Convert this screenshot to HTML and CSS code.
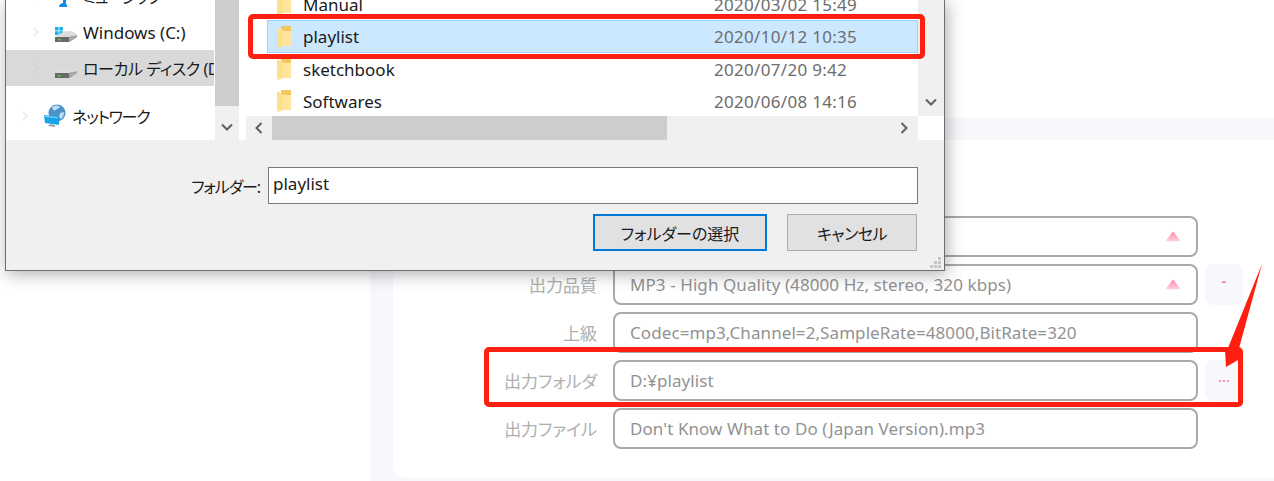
FILE: index.html
```html
<!DOCTYPE html>
<html lang="ja">

<head>
    <meta charset="UTF-8">
    <meta name="viewport" content="width=device-width, initial-scale=1.0">
    <title>出力設定</title>
    <link rel="stylesheet" href="styles.css">
</head>

<body>
    <!-- app behind the dialog -->
    <div class="app">
        <div class="card">
            <div class="row">
                <label class="label"></label>
                <div class="field">
                    <span></span>
                    <svg class="tri" width="14" height="11" viewBox="0 0 14 11"><use href="#tri"/></svg>
                </div>
                <div class="side"></div>
            </div>
            <div class="row">
                <label class="label">出力品質</label>
                <div class="field">
                    <span>MP3 - High Quality (48000 Hz, stereo, 320 kbps)</span>
                    <svg class="tri" width="14" height="11" viewBox="0 0 14 11"><use href="#tri"/></svg>
                </div>
                <button class="side side-btn minus">-</button>
            </div>
            <div class="row">
                <label class="label">上級</label>
                <div class="field"><span>Codec=mp3,Channel=2,SampleRate=48000,BitRate=320</span></div>
                <div class="side"></div>
            </div>
            <div class="row">
                <label class="label">出力フォルダ</label>
                <div class="field"><span>D:¥playlist</span></div>
                <button class="side side-btn">...</button>
            </div>
            <div class="row">
                <label class="label">出力ファイル</label>
                <div class="field"><span>Don't Know What to Do (Japan Version).mp3</span></div>
                <div class="side"></div>
            </div>
        </div>
    </div>

    <!-- folder picker dialog -->
    <div class="dialog">
        <div class="browser">
            <div class="tree">
                <div class="tree-item sub">
                    <svg class="chev" width="6" height="10" viewBox="0 0 6 10"><path d="M1 1l4 4-4 4"/></svg>
                    <svg class="ico" width="22" height="22" viewBox="0 0 22 22"><path d="M8 18V7l11-3v3l-8 2v10a4 3.5 0 1 1-3-1z" fill="#0f8ae6"/></svg>
                    <span class="kana">ミュージック</span>
                </div>
                <div class="tree-item sub">
                    <svg class="chev" width="6" height="10" viewBox="0 0 6 10"><path d="M1 1l4 4-4 4"/></svg>
                    <svg class="ico" width="22" height="22" viewBox="0 0 22 22">
                        <path d="M0 6h3.600v3.600H0zM4.300 6h3.600v3.600H4.300zM0 10.300h3.600v3.600H0zM4.300 10.300h3.600v3.600H4.300z" fill="#12b0ee"/>
                        <use href="#drive"/>
                    </svg>
                    <span>Windows (C:)</span>
                </div>
                <div class="tree-item sub on">
                    <svg class="chev" width="6" height="10" viewBox="0 0 6 10"><path d="M1 1l4 4-4 4"/></svg>
                    <svg class="ico" width="22" height="22" viewBox="0 0 22 22"><use href="#drive"/></svg>
                    <span class="kana">ローカル ディスク (D:)</span>
                </div>
                <div class="tree-item net">
                    <svg class="chev" width="6" height="10" viewBox="0 0 6 10"><path d="M1 1l4 4-4 4"/></svg>
                    <svg class="ico" width="22" height="24" viewBox="0 0 22 24">
                        <circle cx="13" cy="9" r="8.500" fill="#4b93c9"/>
                        <path d="M8 3c3-2 6-2 8 0-1 2-3 1-4 3-2 1-3 0-4-3zM16 9l4-1c0 3-1 5-3 7-2-1-2-4-1-6z" fill="#bfe0f0"/>
                        <path d="M0 11l15 2v8L1 19z" fill="#19a3e8"/>
                        <path d="M1 11.500l13 1.800v1L1 13z" fill="#7fd0f5"/>
                        <path d="M6 20l5 1v2l-7-1z" fill="#9aa7b0"/>
                    </svg>
                    <span class="kana">ネットワーク</span>
                </div>
            </div>
            <div class="tree-scroll">
                <div class="thumb-v"></div>
                <svg class="arrow" width="12" height="8" viewBox="0 0 12 8"><path d="M1 1.500l5 5 5-5"/></svg>
            </div>
            <div class="pane">
                <div class="pane-top">
                    <div class="list">
                        <div class="file"><svg class="folder" width="14" height="22" viewBox="0 0 14 22"><use href="#folder"/></svg><span class="name">Manual</span><span class="date">2020/03/02 15:49</span></div>
                        <div class="file sel"><svg class="folder" width="14" height="22" viewBox="0 0 14 22"><use href="#folder"/></svg><span class="name">playlist</span><span class="date">2020/10/12 10:35</span></div>
                        <div class="file"><svg class="folder" width="14" height="22" viewBox="0 0 14 22"><use href="#folder"/></svg><span class="name">sketchbook</span><span class="date">2020/07/20 9:42</span></div>
                        <div class="file"><svg class="folder" width="14" height="22" viewBox="0 0 14 22"><use href="#folder"/></svg><span class="name">Softwares</span><span class="date">2020/06/08 14:16</span></div>
                    </div>
                    <div class="list-scroll">
                        <svg class="arrow" width="12" height="8" viewBox="0 0 12 8"><path d="M1 1.500l5 5 5-5"/></svg>
                    </div>
                </div>
                <div class="pane-bottom">
                    <div class="hscroll">
                        <div class="h-end"><svg class="arrow" width="8" height="12" viewBox="0 0 8 12"><path d="M6.500 1l-5 5 5 5"/></svg></div>
                        <div class="thumb-h"></div>
                        <div class="h-end h-right"><svg class="arrow" width="8" height="12" viewBox="0 0 8 12"><path d="M1.500 1l5 5-5 5"/></svg></div>
                    </div>
                    <div class="corner"></div>
                </div>
            </div>
        </div>
        <div class="footer">
            <div class="name-row">
                <label class="name-label">フォルダー:</label>
                <input class="name-input" type="text" value="playlist">
            </div>
            <div class="buttons">
                <button class="dlg-btn primary">フォルダーの選択</button>
                <button class="dlg-btn cancel">キャンセル</button>
            </div>
            <svg class="grip" width="12" height="12" viewBox="0 0 12 12"><path d="M8 0h3v3H8zM4 4h3v3H4zM8 4h3v3H8zM0 8h3v3H0zM4 8h3v3H4zM8 8h3v3H8z" fill="#c4c4c4"/></svg>
        </div>
    </div>

    <!-- red marks drawn on top of the screenshot -->
    <div class="mark mark-list"></div>
    <div class="mark mark-field"></div>
    <svg class="pointer" width="40" height="106" viewBox="0 0 40 106"><path d="M38 0L14 88 15 93 14 96 2 103 1 86 4 84z" fill="#ff1f10"/></svg>

    <!-- shared shapes -->
    <svg class="defs" width="0" height="0">
        <defs>
            <linearGradient id="pink" x1="0" y1="0" x2="0" y2="1">
                <stop offset="0" stop-color="#ff8fae"/>
                <stop offset="1" stop-color="#ffcbd9"/>
            </linearGradient>
            <path id="tri" d="M7 1.500L13 9.500H1z" fill="url(#pink)" stroke="url(#pink)" stroke-width="1.500" stroke-linejoin="round"/>
            <g id="drive">
                <path d="M0 16L8 11Q10 10 15 10 19 10 22 14V15L14 17H2z" fill="#dcdcdc"/>
                <path d="M0 16H14L22 14.500V16L14 21H0z" fill="#6a6a6a"/>
                <path d="M14 16L22 14.500V16L14 21z" fill="#a8a8a8"/>
                <path d="M3 18h3v1.500H3z" fill="#4ec24e"/>
            </g>
            <g id="folder">
                <path d="M4 0h10v20H4z" fill="#f0c85f"/>
                <path d="M6 5h8v15H6z" fill="#ffe69c"/>
                <path d="M0 1l6 3v16l-4 2-2-1z" fill="#fde08c"/>
            </g>
        </defs>
    </svg>
</body>

</html>
```

FILE: styles.css
```css
* {
    box-sizing: border-box;
}

html,
body {
    margin: 0;
    height: 481px;
    overflow: hidden;
    background-color: #fff;
}

body {
    position: relative;
    font-family: "Noto Sans", "Noto Sans CJK JP", sans-serif;
    font-size: 17px;
    font-feature-settings: "palt";
}

.defs {
    position: absolute;
}

/* app */
.app {
    margin: 118px 0 0 370px;
    padding: 22px 0 3px 23px;
    height: 363px;
    background-color: #f6f8fc;
}

.card {
    display: flex;
    flex-direction: column;
    gap: 7px;
    height: 338px;
    padding-top: 76px;
    background-color: #fff;
    border-bottom-left-radius: 14px;
}

.row {
    display: flex;
    align-items: center;
    height: 41px;
}

.label {
    width: 204px;
    margin-right: 16px;
    text-align: right;
    font-size: 17px;
    color: #aeaeae;
}

.field {
    display: flex;
    align-items: center;
    justify-content: space-between;
    width: 585px;
    height: 41px;
    padding: 0 16px 0 15px;
    border: 2px solid #a9a9a9;
    border-radius: 8px;
    font-size: 17px;
    letter-spacing: .08px;
    color: #929292;
}

.tri {
    display: block;
}

.side {
    width: 38px;
    height: 41px;
    margin-left: 7px;
}

.side-btn {
    padding: 0 0 10px;
    border: 0;
    border-radius: 8px;
    background-color: #f6f8fc;
    color: #ff6f9f;
    font-family: inherit;
    font-size: 15px;
}

.minus {
    padding-bottom: 10px;
    font-weight: 600;
}

/* dialog */
.dialog {
    position: absolute;
    left: 5px;
    top: 0;
    display: flex;
    flex-direction: column;
    width: 940px;
    height: 271px;
    border: 1px solid #6e6e6e;
    border-top: 0;
    background-color: #f0f0f0;
    box-shadow: 2px 3px 16px rgba(0, 0, 0, .32);
    color: #1a1a1a;
}

.browser {
    display: flex;
    height: 140px;
    background-color: #fff;
}

.tree {
    display: flex;
    flex-direction: column;
    justify-content: flex-end;
    flex: none;
    width: 208px;
    height: 140px;
    margin-right: 1px;
    padding-bottom: 6px;
    overflow: hidden;
}

.tree-item {
    display: flex;
    align-items: center;
    flex: none;
    height: 36px;
    white-space: nowrap;
}

.tree-item.sub {
    padding-left: 27px;
}

.tree-item.net {
    margin-top: 12px;
    padding-left: 16px;
}

.tree-item.on {
    background-color: #d9d9d9;
}

.kana {
    font-size: 16px;
    letter-spacing: -1.200px;
}

.tree-item.on .kana {
    letter-spacing: -.4px;
}

.chev {
    flex: none;
    margin-right: 16px;
    fill: none;
    stroke: #e8e8e8;
    stroke-width: 1.500;
}

.tree-item.on .chev {
    stroke: #d2d2d2;
}

.ico {
    flex: none;
    margin-right: 6px;
}

.tree-scroll {
    display: flex;
    flex-direction: column;
    align-items: center;
    flex: none;
    width: 24px;
    background-color: #f0f0f0;
}

.thumb-v {
    width: 100%;
    height: 106px;
    background-color: #cdcdcd;
}

.arrow {
    display: block;
    fill: none;
    stroke: #606060;
    stroke-width: 2;
}

.tree-scroll .arrow {
    margin-top: 17px;
}

.pane {
    display: flex;
    flex-direction: column;
    flex: none;
    width: 698px;
    margin-left: 7px;
}

.pane-top {
    display: flex;
    height: 116px;
}

.list {
    flex: none;
    width: 672px;
    height: 116px;
    margin-top: -12px;
    padding-left: 21px;
}

.file {
    display: flex;
    align-items: center;
    height: 32px;
    padding-left: 10px;
    white-space: nowrap;
}

.file.sel {
    height: 33px;
    padding-left: 9px;
    border: 1px solid #99d1ff;
    background-color: #cce8ff;
}

.folder {
    flex: none;
    margin-right: 12px;
}

.name {
    width: 411px;
}

.date {
    letter-spacing: .3px;
    color: #6d6d6d;
}

.list-scroll {
    display: flex;
    justify-content: center;
    flex: none;
    width: 26px;
    padding-top: 98px;
    background-color: #f0f0f0;
}

.pane-bottom {
    display: flex;
    height: 24px;
}

.hscroll {
    display: flex;
    flex: none;
    width: 672px;
    background-color: #f0f0f0;
}

.h-end {
    display: flex;
    align-items: center;
    justify-content: center;
    flex: none;
    width: 26px;
}

.h-right {
    margin-left: auto;
    margin-right: 1px;
}

.thumb-h {
    width: 395px;
    background-color: #cdcdcd;
}

.corner {
    flex: 1;
    background-color: #fff;
}

.footer {
    position: relative;
    flex: 1;
    padding: 27px 26px 0 0;
}

.name-row {
    display: flex;
    align-items: center;
    justify-content: flex-end;
}

.name-label {
    margin-right: 8px;
    font-size: 16px;
    letter-spacing: -1.100px;
}

.name-input {
    width: 650px;
    height: 37px;
    padding: 0 4px 5px;
    border: 1px solid #7a7a7a;
    border-radius: 0;
    outline: 0;
    color: #1a1a1a;
    font-family: inherit;
    font-size: 17px;
}

.buttons {
    display: flex;
    justify-content: flex-end;
    gap: 20px;
    margin-top: 10px;
    padding-right: 1px;
}

.dlg-btn {
    height: 37px;
    padding: 0;
    border: 1px solid #adadad;
    border-radius: 0;
    background-color: #e1e1e1;
    color: #1a1a1a;
    font-family: inherit;
    font-size: 16px;
    font-feature-settings: "palt";
}

.primary {
    width: 174px;
    border: 2px solid #0078d7;
}

.cancel {
    width: 130px;
    letter-spacing: -.5px;
}

.grip {
    position: absolute;
    right: 2px;
    bottom: 1px;
}

/* red marks */
.mark {
    position: absolute;
    border: 5px solid #ff1f10;
    border-radius: 5px;
}

.mark-list {
    left: 248px;
    top: 14px;
    width: 677px;
    height: 45px;
}

.mark-field {
    left: 484px;
    top: 347px;
    width: 759px;
    height: 60px;
}

.pointer {
    position: absolute;
    left: 1224px;
    top: 264px;
}
```
